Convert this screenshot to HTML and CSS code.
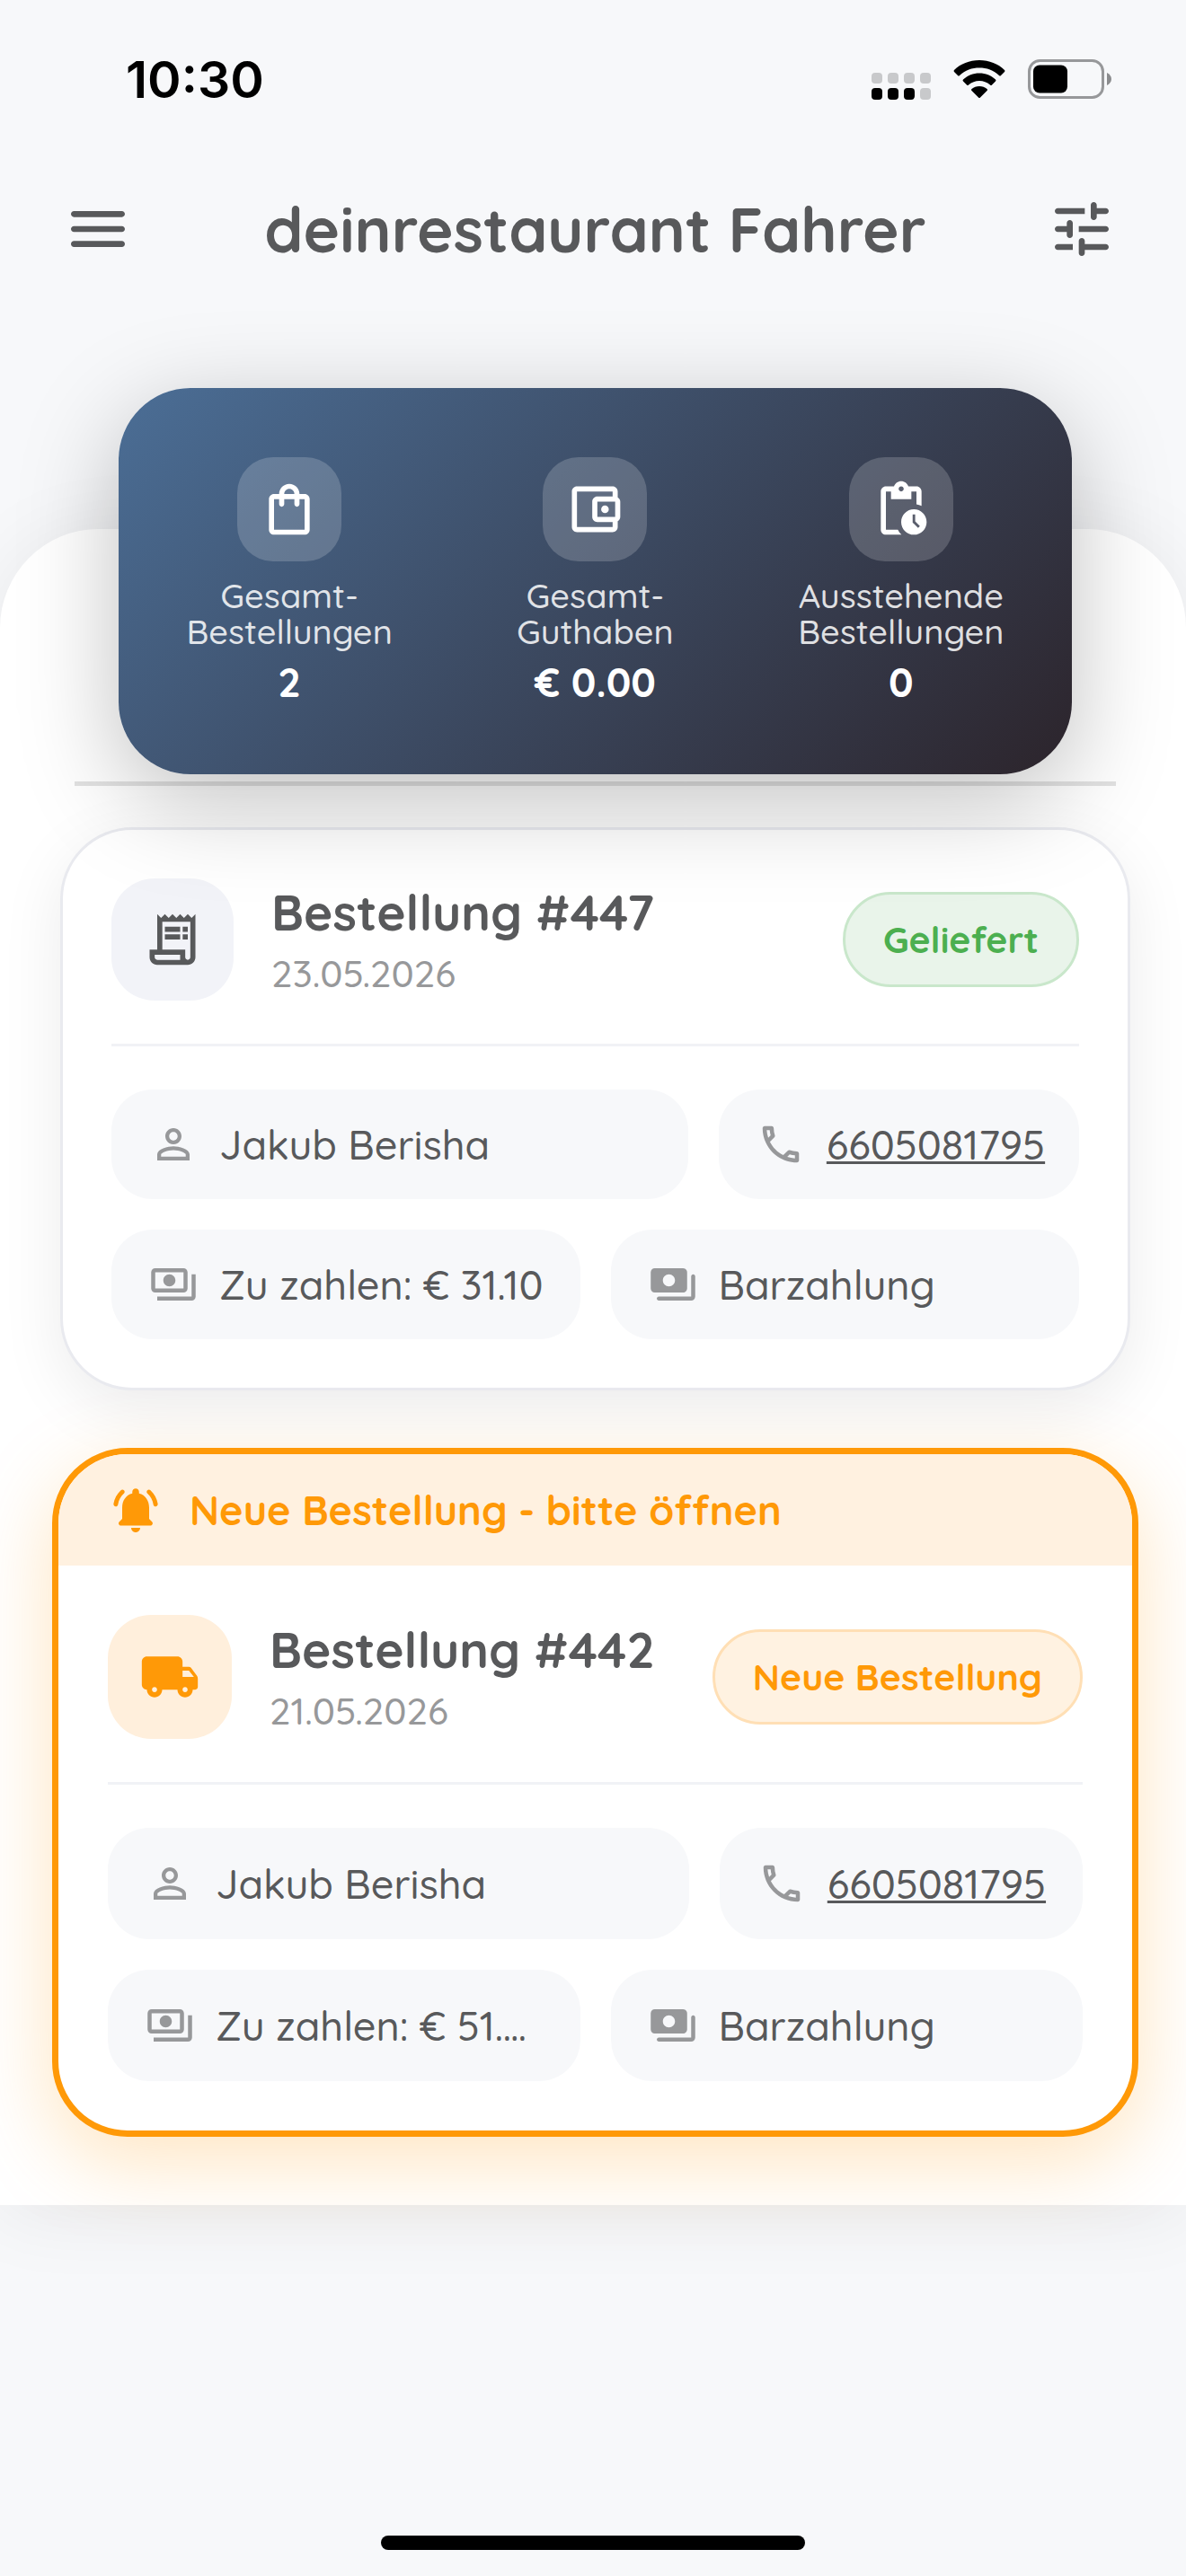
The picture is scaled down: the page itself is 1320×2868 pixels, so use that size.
FILE: index.html
```html
<!DOCTYPE html>
<html lang="de">
<head>
    <meta charset="UTF-8">
    <meta name="viewport" content="width=device-width, initial-scale=1.0">
    <title>deinrestaurant Fahrer</title>
    <link rel="stylesheet" href="styles.css">
</head>
<body>
    <div class="status-bar">
        <span class="time">10:30</span>
        <div class="status-icons">
            <svg class="signal" viewBox="0 0 66 30">
                <g fill="#c8c9cb">
                    <rect x="0" y="0" width="12" height="12" rx="4"/>
                    <rect x="18" y="0" width="12" height="12" rx="4"/>
                    <rect x="36" y="0" width="12" height="12" rx="4"/>
                    <rect x="54" y="0" width="12" height="12" rx="4"/>
                    <rect x="54" y="17" width="12" height="13" rx="4"/>
                </g>
                <rect x="0" y="17" width="12" height="13" rx="4"/>
                <rect x="18" y="17" width="12" height="13" rx="4"/>
                <rect x="36" y="17" width="12" height="13" rx="4"/>
            </svg>
            <svg class="wifi" viewBox="0 0 58 42">
                <path d="M29 0C18 0 8 4 1 11q-1 1 0 2l4 4q1 1 2 0C13 11 21 8.500 29 8.500S45 11 51 17q1 1 2 0l4-4q1-1 0-2C50 4 40 0 29 0z"/>
                <path d="M29 14.500c-7 0-13 2.500-18 7q-1 1 0 2l4 4q1 1 2 0c3.500-3 7.500-4.500 12-4.500s8.500 1.500 12 4.500q1 1 2 0l4-4q1-1 0-2c-5-4.500-11-7-18-7z"/>
                <path d="M29 29c-3.500 0-6 1-8.500 3q-1 1 0 2l7.500 7.500q1 1 2 0l7.500-7.500q1-1 0-2C35 30 32.500 29 29 29z"/>
            </svg>
            <svg class="battery" viewBox="0 0 94 44">
                <rect x="1.500" y="1.500" width="82" height="41" rx="12" fill="none" stroke="#97989a" stroke-width="3"/>
                <rect x="6" y="6.500" width="38" height="31" rx="7"/>
                <path d="M88 15c3 1.500 5 4 5 7s-2 5.500-5 7z" fill="#8b8c8e"/>
            </svg>
        </div>
    </div>

    <header class="header">
        <button class="icon-button" aria-label="Menü">
            <svg viewBox="0 0 24 24"><path d="M4 18h16c.55 0 1-.45 1-1s-.45-1-1-1H4c-.55 0-1 .45-1 1s.45 1 1 1zm0-5h16c.55 0 1-.45 1-1s-.45-1-1-1H4c-.55 0-1 .45-1 1s.45 1 1 1zM3 7c0 .55.45 1 1 1h16c.55 0 1-.45 1-1s-.45-1-1-1H4c-.55 0-1 .45-1 1z"/></svg>
        </button>
        <h1>deinrestaurant Fahrer</h1>
        <button class="icon-button" aria-label="Filter">
            <svg viewBox="0 0 24 24"><path d="M3 18c0 .55.45 1 1 1h5v-2H4c-.55 0-1 .45-1 1zM3 6c0 .55.45 1 1 1h9V5H4c-.55 0-1 .45-1 1zm10 14v-1h7c.55 0 1-.45 1-1s-.45-1-1-1h-7v-1c0-.55-.45-1-1-1s-1 .45-1 1v4c0 .55.45 1 1 1s1-.45 1-1zM7 10v1H4c-.55 0-1 .45-1 1s.45 1 1 1h3v1c0 .55.45 1 1 1s1-.45 1-1v-4c0-.55-.45-1-1-1s-1 .45-1 1zm14 2c0-.55-.45-1-1-1h-9v2h9c.55 0 1-.45 1-1zm-5-3c.55 0 1-.45 1-1V7h3c.55 0 1-.45 1-1s-.45-1-1-1h-3V4c0-.55-.45-1-1-1s-1 .45-1 1v4c0 .55.45 1 1 1z"/></svg>
        </button>
    </header>

    <main class="panel">
        <section class="stats">
            <div class="stat">
                <span class="stat-icon">
                    <svg viewBox="0 0 24 24"><path d="M18 6h-2c0-2.210-1.790-4-4-4S8 3.790 8 6H6c-1.100 0-2 .9-2 2v12c0 1.100.9 2 2 2h12c1.100 0 2-.9 2-2V8c0-1.100-.9-2-2-2zm-6-2c1.100 0 2 .9 2 2h-4c0-1.100.9-2 2-2zm6 16H6V8h2v2c0 .55.45 1 1 1s1-.45 1-1V8h4v2c0 .55.45 1 1 1s1-.45 1-1V8h2v12z"/></svg>
                </span>
                <span class="stat-label">Gesamt-<br>Bestellungen</span>
                <strong class="stat-value">2</strong>
            </div>
            <div class="stat">
                <span class="stat-icon">
                    <svg viewBox="0 0 24 24"><path d="M21 7.280V5c0-1.100-.9-2-2-2H5c-1.110 0-2 .9-2 2v14c0 1.100.89 2 2 2h14c1.100 0 2-.9 2-2v-2.280c.59-.35 1-.98 1-1.720V9c0-.74-.41-1.370-1-1.720zM20 9v6h-7V9h7zM5 19V5h14v2h-6c-1.100 0-2 .9-2 2v6c0 1.100.9 2 2 2h6v2H5z"/><circle cx="16" cy="12" r="1.500"/></svg>
                </span>
                <span class="stat-label">Gesamt-<br>Guthaben</span>
                <strong class="stat-value">€ 0.00</strong>
            </div>
            <div class="stat">
                <span class="stat-icon">
                    <svg viewBox="0 0 24 24"><path d="M17 12c-2.760 0-5 2.240-5 5s2.240 5 5 5 5-2.240 5-5-2.240-5-5-5zm1.650 7.350L16.500 17.200V14h1v2.790l1.850 1.850-.7.710zM18 3h-3.180C14.400 1.840 13.300 1 12 1s-2.400.84-2.820 2H6c-1.100 0-2 .9-2 2v15c0 1.100.9 2 2 2h6.110c-.59-.57-1.070-1.250-1.420-2H6V5h2v3h8V5h2v5.080c.71.1 1.380.31 2 .6V5c0-1.100-.9-2-2-2zm-6 2c-.55 0-1-.45-1-1s.45-1 1-1 1 .45 1 1-.45 1-1 1z"/></svg>
                </span>
                <span class="stat-label">Ausstehende<br>Bestellungen</span>
                <strong class="stat-value">0</strong>
            </div>
        </section>

        <hr class="divider">

        <article class="order">
            <div class="order-body">
                <div class="order-head">
                    <span class="order-icon">
                        <svg viewBox="0 0 24 24"><path d="M19.500 3.500 18 2l-1.500 1.500L15 2l-1.500 1.500L12 2l-1.500 1.500L9 2 7.500 3.500 6 2v14H3v3c0 1.660 1.340 3 3 3h12c1.660 0 3-1.340 3-3V2l-1.500 1.500zM15 20H6c-.55 0-1-.45-1-1v-1h10v2zm4-1c0 .55-.45 1-1 1s-1-.45-1-1v-3H8V5h11v14z"/><path d="M9 7h6v2H9zm7 0h2v2h-2zm-7 3h6v2H9zm7 0h2v2h-2z"/></svg>
                    </span>
                    <div class="order-title">
                        <h2>Bestellung #447</h2>
                        <time datetime="2026-05-23">23.05.2026</time>
                    </div>
                    <span class="badge delivered">Geliefert</span>
                </div>
                <div class="chips chips-contact">
                    <div class="chip">
                        <svg viewBox="0 0 24 24"><path d="M12 5.900c1.160 0 2.100.94 2.100 2.100s-.94 2.100-2.100 2.100S9.900 9.160 9.900 8s.94-2.100 2.100-2.100m0 9c2.970 0 6.100 1.460 6.100 2.100v1.100H5.900V17c0-.64 3.130-2.100 6.100-2.100M12 4C9.790 4 8 5.790 8 8s1.790 4 4 4 4-1.790 4-4-1.790-4-4-4zm0 9c-2.670 0-8 1.340-8 4v3h16v-3c0-2.660-5.330-4-8-4z"/></svg>
                        <span>Jakub Berisha</span>
                    </div>
                    <div class="chip">
                        <svg viewBox="0 0 24 24"><path d="M6.540 5c.06.89.21 1.760.45 2.590l-1.200 1.200c-.41-1.200-.67-2.470-.76-3.790h1.510m9.860 12.020c.85.24 1.720.39 2.600.45v1.490c-1.320-.09-2.590-.35-3.800-.75l1.200-1.190M7.500 3H4c-.55 0-1 .45-1 1 0 9.390 7.610 17 17 17 .55 0 1-.45 1-1v-3.490c0-.55-.45-1-1-1-1.240 0-2.450-.2-3.570-.57-.1-.04-.21-.05-.31-.05-.26 0-.51.1-.71.29l-2.200 2.200c-2.830-1.450-5.150-3.760-6.590-6.590l2.200-2.200c.28-.28.36-.67.25-1.020C8.700 6.450 8.500 5.250 8.500 4c0-.55-.45-1-1-1z"/></svg>
                        <a href="tel:6605081795">6605081795</a>
                    </div>
                </div>
                <div class="chips">
                    <div class="chip">
                        <svg viewBox="0 0 24 24"><path d="M19 14V6c0-1.100-.9-2-2-2H3c-1.100 0-2 .9-2 2v8c0 1.100.9 2 2 2h14c1.100 0 2-.9 2-2zm-2 0H3V6h14v8zm-7-7c-1.660 0-3 1.340-3 3s1.340 3 3 3 3-1.340 3-3-1.340-3-3-3zm13 0v11c0 1.100-.9 2-2 2H4v-2h17V7h2z"/></svg>
                        <span>Zu zahlen: € 31.10</span>
                    </div>
                    <div class="chip">
                        <svg viewBox="0 0 24 24"><path d="M19 14V6c0-1.100-.9-2-2-2H3c-1.100 0-2 .9-2 2v8c0 1.100.9 2 2 2h14c1.100 0 2-.9 2-2zm-9-1c-1.660 0-3-1.340-3-3s1.340-3 3-3 3 1.340 3 3-1.340 3-3 3zm13-5v10c0 1.100-.9 2-2 2H5c-.55 0-1-.45-1-1s.45-1 1-1h16V8c0-.55.45-1 1-1s1 .45 1 1z"/></svg>
                        <span>Barzahlung</span>
                    </div>
                </div>
            </div>
        </article>

        <article class="order new">
            <div class="order-alert">
                <svg viewBox="0 0 24 24"><path d="M12 22c1.100 0 2-.9 2-2h-4c0 1.100.9 2 2 2zm6-6v-5c0-3.070-1.630-5.640-4.500-6.320V4c0-.83-.67-1.500-1.500-1.500s-1.500.67-1.500 1.500v.68C7.640 5.360 6 7.920 6 11v5l-1.300 1.300c-.63.63-.18 1.700.7 1.700h13.170c.89 0 1.340-1.080.71-1.710L18 16zM6.770 4.730c.42-.38.43-1.030.03-1.430-.38-.38-1-.39-1.390-.02C3.700 4.840 2.520 6.960 2.140 9.340c-.09.61.38 1.160 1 1.160.48 0 .9-.35.98-.83.3-1.940 1.260-3.670 2.650-4.940zM18.600 3.280c-.4-.37-1.020-.36-1.400.02-.4.400-.38 1.040.03 1.420 1.380 1.270 2.350 3 2.650 4.940.07.48.49.83.98.83.61 0 1.090-.55.99-1.160-.38-2.370-1.550-4.480-3.250-6.050z"/></svg>
                <span>Neue Bestellung - bitte öffnen</span>
            </div>
            <div class="order-body">
                <div class="order-head">
                    <span class="order-icon">
                        <svg viewBox="0 0 24 24"><path d="M19.500 8H17V6c0-1.100-.9-2-2-2H3c-1.100 0-2 .9-2 2v9c0 1.100.9 2 2 2 0 1.660 1.340 3 3 3s3-1.340 3-3h6c0 1.660 1.340 3 3 3s3-1.340 3-3h1c.55 0 1-.45 1-1v-3.330c0-.43-.14-.85-.4-1.200L20.300 8.400c-.19-.25-.49-.4-.8-.4zM6 18c-.55 0-1-.45-1-1s.45-1 1-1 1 .45 1 1-.45 1-1 1zm13.500-8.500 1.960 2.500H17V9.500h2.500zM18 18c-.55 0-1-.45-1-1s.45-1 1-1 1 .45 1 1-.45 1-1 1z"/></svg>
                    </span>
                    <div class="order-title">
                        <h2>Bestellung #442</h2>
                        <time datetime="2026-05-21">21.05.2026</time>
                    </div>
                    <span class="badge">Neue Bestellung</span>
                </div>
                <div class="chips chips-contact">
                    <div class="chip">
                        <svg viewBox="0 0 24 24"><path d="M12 5.900c1.160 0 2.100.94 2.100 2.100s-.94 2.100-2.100 2.100S9.900 9.160 9.900 8s.94-2.100 2.100-2.100m0 9c2.970 0 6.100 1.460 6.100 2.100v1.100H5.900V17c0-.64 3.130-2.100 6.100-2.100M12 4C9.790 4 8 5.790 8 8s1.790 4 4 4 4-1.790 4-4-1.790-4-4-4zm0 9c-2.670 0-8 1.340-8 4v3h16v-3c0-2.660-5.330-4-8-4z"/></svg>
                        <span>Jakub Berisha</span>
                    </div>
                    <div class="chip">
                        <svg viewBox="0 0 24 24"><path d="M6.540 5c.06.89.21 1.760.45 2.590l-1.200 1.200c-.41-1.200-.67-2.470-.76-3.790h1.510m9.860 12.020c.85.24 1.720.39 2.600.45v1.490c-1.320-.09-2.590-.35-3.800-.75l1.200-1.190M7.500 3H4c-.55 0-1 .45-1 1 0 9.390 7.610 17 17 17 .55 0 1-.45 1-1v-3.490c0-.55-.45-1-1-1-1.240 0-2.450-.2-3.570-.57-.1-.04-.21-.05-.31-.05-.26 0-.51.1-.71.29l-2.200 2.200c-2.830-1.450-5.150-3.760-6.590-6.590l2.200-2.200c.28-.28.36-.67.25-1.020C8.700 6.450 8.500 5.250 8.500 4c0-.55-.45-1-1-1z"/></svg>
                        <a href="tel:6605081795">6605081795</a>
                    </div>
                </div>
                <div class="chips">
                    <div class="chip">
                        <svg viewBox="0 0 24 24"><path d="M19 14V6c0-1.100-.9-2-2-2H3c-1.100 0-2 .9-2 2v8c0 1.100.9 2 2 2h14c1.100 0 2-.9 2-2zm-2 0H3V6h14v8zm-7-7c-1.660 0-3 1.340-3 3s1.340 3 3 3 3-1.340 3-3-1.340-3-3-3zm13 0v11c0 1.100-.9 2-2 2H4v-2h17V7h2z"/></svg>
                        <span>Zu zahlen: € 51.…</span>
                    </div>
                    <div class="chip">
                        <svg viewBox="0 0 24 24"><path d="M19 14V6c0-1.100-.9-2-2-2H3c-1.100 0-2 .9-2 2v8c0 1.100.9 2 2 2h14c1.100 0 2-.9 2-2zm-9-1c-1.660 0-3-1.340-3-3s1.340-3 3-3 3 1.340 3 3-1.340 3-3 3zm13-5v10c0 1.100-.9 2-2 2H5c-.55 0-1-.45-1-1s.45-1 1-1h16V8c0-.55.45-1 1-1s1 .45 1 1z"/></svg>
                        <span>Barzahlung</span>
                    </div>
                </div>
            </div>
        </article>
    </main>

    <div class="home-indicator"></div>
</body>
</html>
```
FILE: styles.css
```css
* {
    box-sizing: border-box;
}

body {
    font-family: Quicksand, Lato, sans-serif;
    font-weight: 500;
    margin: 0;
    min-height: 100vh;
    display: flex;
    flex-direction: column;
    background-color: #f7f8fa;
    color: #58595b;
}

svg {
    display: block;
    flex-shrink: 0;
    fill: currentColor;
}

/* status bar */
.status-bar {
    display: flex;
    justify-content: space-between;
    align-items: center;
    height: 176px;
    padding: 0 82px 0 140px;
    color: black;
}
.time {
    font-family: Inter, sans-serif;
    font-size: 57px;
    font-weight: 600;
}
.status-icons {
    display: flex;
    align-items: center;
    gap: 25px;
}
.signal {
    width: 66px;
    height: 30px;
    margin-top: 16px;
}
.wifi {
    width: 58px;
    height: 42px;
}
.battery {
    width: 94px;
    height: 44px;
}

/* header */
.header {
    display: flex;
    justify-content: space-between;
    align-items: center;
    height: 158px;
    padding: 0 76px 0 69px;
}
.header h1 {
    margin: 0 0 0 12px;
    font-size: 69px;
    font-weight: bold;
    line-height: 80px;
}
.icon-button {
    padding: 0;
    border: none;
    background: none;
    color: inherit;
    cursor: pointer;
}
.icon-button svg {
    width: 80px;
    height: 80px;
}

/* white sheet */
.panel {
    display: flow-root;
    margin-top: 255px;
    padding: 0 53px 76px 58px;
    background-color: white;
    border-radius: 110px 110px 0 0;
    box-shadow: 0 8px 90px rgba(0, 0, 0, 0.07);
}

/* stats card, pulled up over the top edge of the sheet */
.stats {
    position: relative;
    z-index: 1;
    display: grid;
    grid-template-columns: repeat(3, 1fr);
    margin: -157px 74px 0;
    padding: 77px 20px 76px;
    border-radius: 80px;
    background: linear-gradient(135deg, #4b6e96, #2c242b);
    box-shadow: 0 28px 110px rgba(0, 0, 0, 0.25);
    color: white;
}
.stat {
    display: flex;
    flex-direction: column;
    align-items: center;
    text-align: center;
}
.stat-icon {
    display: grid;
    place-items: center;
    width: 116px;
    height: 116px;
    border-radius: 40px;
    background-color: rgba(255, 255, 255, 0.18);
}
.stat-icon svg {
    width: 68px;
    height: 68px;
}
.stat-label {
    margin-top: 18px;
    font-size: 38px;
    line-height: 40px;
    color: rgba(255, 255, 255, 0.85);
}
.stat-value {
    margin-top: 9px;
    font-size: 45px;
    line-height: 54px;
}

.divider {
    height: 5px;
    margin: 8px 25px 46px;
    border: none;
    background-color: #e2e2e2;
}

/* order cards */
.order {
    margin: 0 9px;
    border: 3px solid #e9eaef;
    border-radius: 80px;
    background-color: white;
    box-shadow: 0 20px 70px rgba(0, 0, 0, 0.08);
    overflow: hidden;
}
.order.new {
    margin: 64px 0 0;
    border: 7px solid #ff9907;
    border-radius: 84px;
    box-shadow: 0 28px 90px rgba(255, 153, 7, 0.25);
}
.order-alert {
    display: flex;
    align-items: center;
    gap: 30px;
    padding: 32px 56px;
    background-color: #fff1e0;
    color: #ff9907;
    font-size: 45px;
    font-weight: bold;
    line-height: 60px;
}
.order-alert svg {
    width: 60px;
    height: 60px;
}
.order-body {
    padding: 54px;
}
.new .order-body {
    padding: 55px;
}
.order-head {
    display: flex;
    align-items: center;
    gap: 42px;
    padding-bottom: 48px;
    margin-bottom: 48px;
    border-bottom: 3px solid #f1f2f6;
}
.order-icon {
    display: grid;
    place-items: center;
    width: 136px;
    height: 136px;
    border-radius: 48px;
    background-color: #f2f3f8;
}
.new .order-icon {
    width: 138px;
    height: 138px;
    background-color: #ffefdc;
    color: #ff9907;
}
.order-icon svg {
    width: 68px;
    height: 68px;
}
.order-title {
    flex: 1;
    white-space: nowrap;
}
.order-title h2 {
    margin: 0;
    font-size: 55px;
    line-height: 76px;
}
.order-title time {
    display: block;
    font-size: 42px;
    line-height: 60px;
    color: #97989a;
}
.badge {
    padding: 24px 42px;
    border: 3px solid #ffdfb5;
    border-radius: 54px;
    background-color: #fff2e1;
    color: #ff9907;
    font-size: 41px;
    font-weight: bold;
    line-height: 52px;
    white-space: nowrap;
}
.badge.delivered {
    border-color: #c9e7cb;
    background-color: #e9f4ea;
    color: #4caf50;
}

.chips {
    display: grid;
    grid-template-columns: 1fr 1fr;
    gap: 34px;
}
.chips-contact {
    grid-template-columns: 8fr 5fr;
    margin-bottom: 34px;
}
.chip {
    display: flex;
    align-items: center;
    gap: 24px;
    min-width: 0;
    padding: 34px 40px 34px 42px;
    border-radius: 46px;
    background-color: #f7f8fa;
    font-size: 45px;
    line-height: 54px;
    white-space: nowrap;
}
.new .chip {
    padding-top: 35px;
    padding-bottom: 35px;
}
.chip svg {
    width: 54px;
    height: 54px;
    color: #97989a;
}
.chip a {
    color: inherit;
    text-decoration-thickness: 3px;
}

.home-indicator {
    width: 472px;
    height: 16px;
    margin: auto auto 29px;
    border-radius: 8px;
    background-color: black;
}
```
